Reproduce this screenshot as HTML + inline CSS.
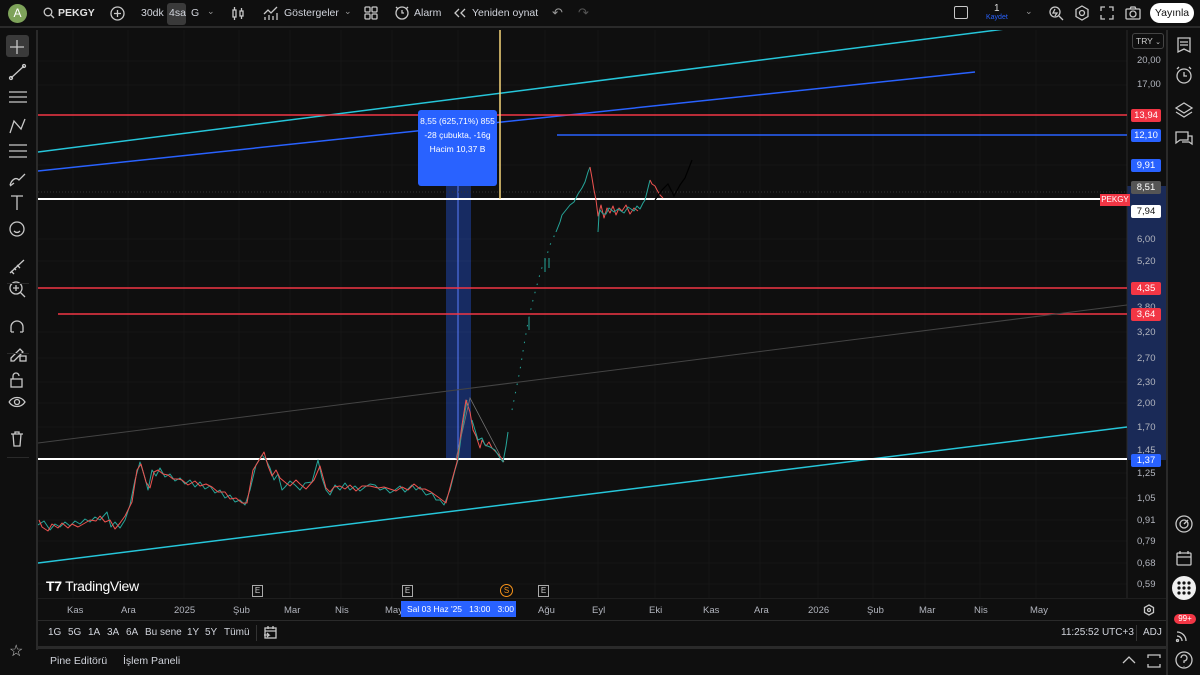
<!DOCTYPE html>
<html><head><meta charset="utf-8"><style>
*{margin:0;padding:0;box-sizing:border-box}
body{width:1200px;height:675px;background:#0f0f0f;font-family:"Liberation Sans",sans-serif;color:#d1d4dc;position:relative;overflow:hidden;font-size:12px}
.a{position:absolute;white-space:nowrap}
.pl{position:absolute;left:1131px;width:30px;height:13px;font-size:9.5px;line-height:13px;text-align:center;border-radius:2px;color:#fff}
.ax{position:absolute;left:1137px;font-size:9.5px;color:#b2b5be}
.tl{position:absolute;top:605px;font-size:9.5px;color:#b2b5be}
.rb{position:absolute;top:627px;font-size:10px;color:#d1d4dc}
.ic{position:absolute;stroke:#c8c8c8;fill:none;stroke-width:1.3}
.tb{font-size:10.5px}
</style></head><body>
<!-- top bar -->
<div class="a" style="left:0;top:0;width:1200px;height:28px;background:#0f0f0f;border-bottom:2px solid #2a2a2a"></div>
<div class="a" style="left:8px;top:4px;width:19px;height:19px;border-radius:50%;background:#7ea35a;color:#fff;font-size:12px;text-align:center;line-height:19px">A</div>
<svg class="ic" style="left:43px;top:7px" width="12" height="12"><circle cx="5" cy="5" r="3.8"/><path d="M8 8l3 3"/></svg>
<div class="a tb" style="left:58px;top:7px;font-weight:bold;color:#e0e0e0">PEKGY</div>
<svg class="ic" style="left:110px;top:6px" width="15" height="15"><circle cx="7.5" cy="7.5" r="6.5"/><path d="M7.5 4v7M4 7.5h7"/></svg>
<div class="a tb" style="left:141px;top:7px">30dk</div>
<div class="a" style="left:167px;top:3px;width:19px;height:22px;background:#3a3a3a;border-radius:3px"></div>
<div class="a tb" style="left:169px;top:7px">4sa</div>
<div class="a tb" style="left:191px;top:7px">G</div>
<div class="a" style="left:207px;top:6px;font-size:9px;color:#999">⌄</div>
<svg class="ic" style="left:231px;top:6px" width="14" height="15"><rect x="2" y="4" width="3" height="7"/><path d="M3.5 1v3M3.5 11v3"/><rect x="9" y="5" width="3" height="5"/><path d="M10.5 2v3M10.5 10v3"/></svg>
<svg class="ic" style="left:263px;top:5px" width="16" height="16"><path d="M1 9l4-4 3 3 6-6M2 15v-3M6 15v-5M10 15v-4M14 15v-7"/></svg>
<div class="a tb" style="left:284px;top:7px">Göstergeler</div>
<div class="a" style="left:344px;top:6px;font-size:9px;color:#999">⌄</div>
<svg class="ic" style="left:364px;top:6px" width="14" height="14"><rect x="1" y="1" width="5" height="5" rx="1"/><rect x="8" y="1" width="5" height="5" rx="1"/><rect x="1" y="8" width="5" height="5" rx="1"/><rect x="8" y="8" width="5" height="5" rx="1"/></svg>
<svg class="ic" style="left:394px;top:5px" width="16" height="16"><circle cx="8" cy="8" r="6"/><path d="M8 5v3h2M2 2l2 2M14 2l-2 2"/></svg>
<div class="a tb" style="left:414px;top:7px">Alarm</div>
<svg class="ic" style="left:454px;top:8px" width="12" height="10"><path d="M5 1L1 5l4 4M11 1L7 5l4 4"/></svg>
<div class="a tb" style="left:472px;top:7px">Yeniden oynat</div>
<div class="a" style="left:552px;top:5px;font-size:13px;color:#999">↶</div>
<div class="a" style="left:578px;top:5px;font-size:13px;color:#555">↷</div>
<div class="a" style="left:954px;top:6px;width:14px;height:13px;border:1.3px solid #c8c8c8;border-radius:2px"></div>
<div class="a" style="left:994px;top:3px;font-size:10px;color:#ddd">1</div>
<div class="a" style="left:986px;top:14px;font-size:7px;color:#2962ff">Kaydet</div>
<div class="a" style="left:1025px;top:6px;font-size:9px;color:#999">⌄</div>
<svg class="ic" style="left:1048px;top:5px" width="16" height="16"><circle cx="7" cy="7" r="5"/><path d="M11 11l4 4M7 4l-2 4h4l-2 3"/></svg>
<svg class="ic" style="left:1074px;top:5px" width="16" height="16"><path d="M8 1l6 3.5v7L8 15l-6-3.5v-7z"/><circle cx="8" cy="8" r="2.5"/></svg>
<svg class="ic" style="left:1100px;top:6px" width="14" height="14"><path d="M1 5V1h4M9 1h4v4M13 9v4H9M5 13H1V9"/></svg>
<svg class="ic" style="left:1125px;top:6px" width="16" height="14"><rect x="1" y="3" width="14" height="10" rx="1"/><circle cx="8" cy="8" r="3"/><path d="M5 3l1-2h4l1 2"/></svg>
<div class="a" style="left:1150px;top:3px;width:44px;height:20px;border-radius:10px;background:#fff;color:#111;font-size:10.5px;text-align:center;line-height:20px">Yayınla</div>
<!-- left toolbar -->
<div class="a" style="left:36px;top:30px;width:2px;height:620px;background:#2a2a2a"></div>
<div class="a" style="left:6px;top:35px;width:23px;height:22px;background:#3a3a3a;border-radius:3px"></div>
<svg class="ic" style="left:0;top:30px" width="36" height="420" stroke="#c8c8c8">
<path d="M17 10v14M10 17h14"/>
<path d="M11 48l13-12"/><circle cx="11" cy="48" r="1.5"/><circle cx="24" cy="36" r="1.5"/>
<path d="M9 62h18M9 67h18M9 72h18"/>
<path d="M10 103l4-12 7 8 4-10"/>
<path d="M9 115h18M9 121h18M9 127h18"/>
<path d="M10 155c2-6 6-8 9-5l6-6M14 153l-4 3"/>
<path d="M11 166h12M17 166v14"/>
<circle cx="17" cy="199" r="7"/><path d="M14 201c2 2 4 2 6 0"/>
<path d="M10 243l14-13M11 241l3 3M14 238l2 2M17 235l3 3"/>
<circle cx="16" cy="258" r="6"/><path d="M20 262l5 5M13 258h6M16 255v6"/>
<path d="M11 302v-5a6 6 0 0 1 12 0v5M11 302h3M20 302h3"/>
<path d="M11 328l9-9 3 3-9 9h-3z"/><rect x="20" y="326" width="6" height="5"/>
<rect x="11" y="349" width="11" height="8"/><path d="M13 349v-3a3 3 0 0 1 6 0"/>
<path d="M9 372c4-6 12-6 16 0c-4 6-12 6-16 0"/><circle cx="17" cy="372" r="2.5"/>
<path d="M11 404h12M13 404l1 12h6l1-12M15 404v-2h4v2"/>
</svg>
<div class="a" style="left:7px;top:283px;width:22px;height:1px;background:#2a2a2a"></div>
<div class="a" style="left:7px;top:353px;width:22px;height:1px;background:#2a2a2a"></div>
<div class="a" style="left:7px;top:457px;width:22px;height:1px;background:#2a2a2a"></div>
<div class="a" style="left:9px;top:641px;font-size:16px;color:#c8c8c8">☆</div>
<!-- right sidebar -->
<div class="a" style="left:1166px;top:30px;width:2px;height:645px;background:#2a2a2a"></div>
<svg class="ic" style="left:1168px;top:30px" width="32" height="645">
<path d="M10 8h12v14l-6-3-6 3z M12 12h8M12 15h8"/>
<circle cx="16" cy="46" r="7"/><path d="M16 42v4h3M9 39l2-2M23 39l-2-2"/>
<path d="M8 78l8-5 8 5-8 5zM8 82l8 5 8-5"/>
<path d="M8 102h12v8h-8l-4 3zM20 106h4v8l-3-2h-7"/>
<circle cx="16" cy="494" r="8"/><circle cx="16" cy="494" r="4"/><path d="M16 494l4-4"/>
<rect x="9" y="523" width="14" height="12" rx="1"/><path d="M9 527h14M12 521v3M20 521v3"/>
<path d="M9 602a9 9 0 0 1 9 9M9 606a5 5 0 0 1 5 5"/><circle cx="9.5" cy="610.5" r="1"/>
<circle cx="16" cy="630" r="8"/><path d="M13 628a3 3 0 1 1 3 3v2M16 636v.5"/>
</svg>
<div class="a" style="left:1172px;top:576px;width:24px;height:24px;border-radius:50%;background:#f0f0f0"></div>
<svg class="a" style="left:1176px;top:580px" width="16" height="16"><g fill="#111"><circle cx="3" cy="3" r="1.6"/><circle cx="8" cy="3" r="1.6"/><circle cx="13" cy="3" r="1.6"/><circle cx="3" cy="8" r="1.6"/><circle cx="8" cy="8" r="1.6"/><circle cx="13" cy="8" r="1.6"/><circle cx="3" cy="13" r="1.6"/><circle cx="8" cy="13" r="1.6"/><circle cx="13" cy="13" r="1.6"/></g></svg>
<div class="a" style="left:1174px;top:614px;width:22px;height:10px;border-radius:5px;background:#f23645;color:#fff;font-size:8px;text-align:center;line-height:10px">99+</div>
<!-- chart svg -->
<svg class="a" style="left:38px;top:30px" width="1128" height="568" viewBox="38 30 1128 568">
<g stroke="#161616" stroke-width="1">
<path d="M73 30v568M128 30v568M184 30v568M239 30v568M290 30v568M341 30v568M392 30v568M458 30v568M545 30v568M598 30v568M655 30v568M709 30v568M760 30v568M818 30v568M873 30v568M925 30v568M980 30v568M1036 30v568"/>
<path d="M38 61h1089M38 85h1089M38 165h1089M38 239h1089M38 261h1089M38 332h1089M38 358h1089M38 382h1089M38 403h1089M38 427h1089M38 473h1089M38 498h1089M38 520h1089M38 541h1089M38 563h1089M38 584h1089"/>
</g>
<rect x="1127" y="186" width="40" height="274" fill="#1a2a57"/>
<path d="M1127 30v568" stroke="#2a2a2a"/>
<rect x="446" y="165" width="25" height="294" fill="#2962ff" opacity="0.35"/>
<path d="M458 459V167M454 172l4-5 4 5" stroke="#5a7dff" fill="none" stroke-width="1"/>
<path d="M38 152L1005 29" stroke="#26c6da" stroke-width="1.5"/>
<path d="M38 171L975 72" stroke="#2962ff" stroke-width="1.5"/>
<path d="M38 115H1127" stroke="#f23645" stroke-width="1.5"/>
<path d="M557 135H1127" stroke="#2962ff" stroke-width="1.5"/>
<path d="M38 288H1127M58 314H1127" stroke="#f23645" stroke-width="1.5"/>
<path d="M38 443L1127 305" stroke="#444" stroke-width="1"/>
<path d="M38 563L1127 427" stroke="#26c6da" stroke-width="1.5"/>
<path d="M38 199H1100" stroke="#fff" stroke-width="2"/>
<path d="M38 459H1127" stroke="#fff" stroke-width="2"/>
<path d="M38 192H1127" stroke="#333" stroke-width="1" stroke-dasharray="1 2"/>
<path d="M500 30V199" stroke="#f7d57a" stroke-width="1.5"/>
<g fill="none" stroke-width="1" stroke-linejoin="round">
<polyline stroke="#26a69a" points="38,525 44,521 50,530 55,524 60,527 65,522 70,526 75,521 80,524 85,519 90,522 95,517 100,520 107,512 111,527 115,522 120,528 125,520 130,505 135,480 140,462 145,478 148,490 152,470 156,476 160,468 165,477 170,474 175,481 180,478 185,484 190,480 195,487 200,482 205,489 210,486 215,493 220,490 225,498 230,495 235,502 240,500 245,505 250,490 256,465 262,455 266,460 270,468 274,480 278,474 282,490 285,487 290,481 295,485 300,490 305,483 312,482 318,460 322,478 326,490 330,495 335,485 340,490 345,483 350,490 355,486 360,491 365,487 370,484 375,485 380,490 385,488 390,493 395,490 400,486 405,492 412,485 416,490 420,487 426,495 432,493 436,500 440,500 444,505 450,490 455,470 458,460 462,430 467,400"/>
<polyline stroke="#ef5350" points="39,520 42,527 48,531 52,524 58,528 62,523 68,528 72,524 78,527 85,523 90,520 96,521 100,516 105,522 110,520 115,529 120,523 125,516 132,502 137,470 141,464 146,482 150,488 154,472 158,470 163,474 168,475 173,479 178,479 182,480 188,485 195,481 200,486 206,484 212,487 218,492 225,492 230,499 236,498 242,503 247,503 253,470 258,462 264,452 268,466 272,476 276,470 280,478 286,483 290,486 296,480 300,484 306,489 314,480 320,466 326,488 330,492 334,487 340,486 345,489 350,485 356,491 362,486 370,486 378,488 384,487 390,489 396,491 402,487 408,490 414,484 420,489 425,489 431,492 438,497 446,503 452,480 457,462 462,425 466,400 470,412 473,430 476,436 480,448 482,440 486,446 489,442 492,448 496,452 500,456 504,462"/>
<polyline stroke="#26a69a" points="472,420 478,440 482,438 485,445 490,447 495,450 500,458 503,462 506,446 508,432"/>
<polyline stroke="#26a69a" stroke-dasharray="1.5 7" points="512,410 515,395 520,370 524,345 528,322 533,300 537,285 541,270 546,258 550,245 556,232"/>
<path d="M529 330v-12M545 272v-14M549 268v-10" stroke="#26a69a"/>
<polyline stroke="#26a69a" points="556,232 560,222 562,215 566,210 570,205 574,202 578,194 582,188 585,182 588,172 590,167"/>
<polyline stroke="#ef5350" points="590,167 592,178 594,190 596,200 598,216 601,205 604,218 607,208 610,213 613,206 616,215 619,208 622,211 626,205 630,214 634,208 638,211"/>
<polyline stroke="#26a69a" points="598,232 599,215 600,210 603,214 606,214 609,208 614,212 618,209 624,213 628,207 634,211 637,206 640,209 643,203 645,200 648,188 650,180"/>
<polyline stroke="#ef5350" points="650,180 652,184 655,186 657,190 660,195 663,198"/>
</g>
<polyline fill="none" stroke="#000" stroke-width="1.2" points="655,200 662,190 668,184 674,196 680,185 685,178 692,160"/>
<path d="M456 459L470 398L500 455" stroke="#777" stroke-width="0.8" fill="none"/>
</svg>
<!-- tooltip -->
<div class="a" style="left:418px;top:110px;width:79px;height:76px;background:#2962ff;border-radius:3px;color:#fff;font-size:8.5px;text-align:center;line-height:14px;padding-top:4px">8,55 (625,71%) 855<br>-28 çubukta, -16g<br>Hacim 10,37 B</div>
<!-- price axis -->
<div class="a" style="left:1132px;top:33px;width:32px;height:16px;border:1px solid #444;border-radius:3px;font-size:8.5px;line-height:14px;padding-left:3px;color:#ccc">TRY <span style="font-size:7px">⌄</span></div>
<div class="ax" style="top:55px">20,00</div>
<div class="ax" style="top:79px">17,00</div>
<div class="pl" style="top:109px;background:#f23645">13,94</div>
<div class="pl" style="top:129px;background:#2962ff">12,10</div>
<div class="pl" style="top:159px;background:#2962ff">9,91</div>
<div class="pl" style="top:181px;background:#555">8,51</div>
<div class="a" style="left:1100px;top:194px;width:30px;height:12px;background:#f23645;color:#fff;font-size:8px;text-align:center;line-height:12px">PEKGY</div>
<div class="pl" style="top:205px;background:#fff;color:#111">7,94</div>
<div class="ax" style="top:234px">6,00</div>
<div class="ax" style="top:256px">5,20</div>
<div class="pl" style="top:282px;background:#f23645">4,35</div>
<div class="ax" style="top:302px">3,80</div>
<div class="pl" style="top:308px;background:#f23645">3,64</div>
<div class="ax" style="top:327px">3,20</div>
<div class="ax" style="top:353px">2,70</div>
<div class="ax" style="top:377px">2,30</div>
<div class="ax" style="top:398px">2,00</div>
<div class="ax" style="top:422px">1,70</div>
<div class="ax" style="top:445px">1,45</div>
<div class="pl" style="top:454px;background:#2962ff">1,37</div>
<div class="ax" style="top:468px">1,25</div>
<div class="ax" style="top:493px">1,05</div>
<div class="ax" style="top:515px">0,91</div>
<div class="ax" style="top:536px">0,79</div>
<div class="ax" style="top:558px">0,68</div>
<div class="ax" style="top:579px">0,59</div>
<svg class="ic" style="left:1143px;top:604px" width="12" height="12"><path d="M6 1l4.5 2.5v5L6 11 1.5 8.5v-5z"/><circle cx="6" cy="6" r="1.5"/></svg>
<!-- logo & markers -->
<div class="a" style="left:46px;top:578px;font-size:14px;color:#fff;letter-spacing:-0.3px"><span style="font-weight:900">T7</span> TradingView</div>
<div class="a" style="left:252px;top:585px;width:11px;height:12px;border:1px solid #aaa;font-size:8px;text-align:center;line-height:10px;color:#ccc">E</div>
<div class="a" style="left:402px;top:585px;width:11px;height:12px;border:1px solid #aaa;font-size:8px;text-align:center;line-height:10px;color:#ccc">E</div>
<div class="a" style="left:538px;top:585px;width:11px;height:12px;border:1px solid #aaa;font-size:8px;text-align:center;line-height:10px;color:#ccc">E</div>
<div class="a" style="left:500px;top:584px;width:13px;height:13px;border:1.3px solid #f7931a;border-radius:50%;font-size:8px;text-align:center;line-height:11px;color:#f7931a">S</div>
<!-- time axis -->
<div class="a" style="left:38px;top:598px;width:1128px;height:1px;background:#1e1e1e"></div>
<div class="tl" style="left:67px">Kas</div><div class="tl" style="left:121px">Ara</div><div class="tl" style="left:174px">2025</div><div class="tl" style="left:233px">Şub</div><div class="tl" style="left:284px">Mar</div><div class="tl" style="left:335px">Nis</div><div class="tl" style="left:385px">May</div>
<div class="a" style="left:401px;top:601px;width:115px;height:16px;background:#2962ff;color:#fff;font-size:8.5px;line-height:16px;padding-left:6px">Sal 03 Haz '25 &nbsp; 13:00 &nbsp; 3:00</div>
<div class="tl" style="left:538px">Ağu</div><div class="tl" style="left:592px">Eyl</div><div class="tl" style="left:649px">Eki</div><div class="tl" style="left:703px">Kas</div><div class="tl" style="left:754px">Ara</div><div class="tl" style="left:808px">2026</div><div class="tl" style="left:867px">Şub</div><div class="tl" style="left:919px">Mar</div><div class="tl" style="left:974px">Nis</div><div class="tl" style="left:1030px">May</div>
<!-- range bar -->
<div class="a" style="left:38px;top:620px;width:1128px;height:1px;background:#2a2a2a"></div>
<div class="rb" style="left:48px">1G</div><div class="rb" style="left:68px">5G</div><div class="rb" style="left:88px">1A</div><div class="rb" style="left:107px">3A</div><div class="rb" style="left:126px">6A</div><div class="rb" style="left:145px">Bu sene</div><div class="rb" style="left:187px">1Y</div><div class="rb" style="left:205px">5Y</div><div class="rb" style="left:224px">Tümü</div>
<div class="a" style="left:256px;top:625px;width:1px;height:16px;background:#333"></div>
<svg class="ic" style="left:263px;top:625px" width="14" height="15"><rect x="2" y="3" width="11" height="10"/><path d="M2 6h11M5 1v3M10 1v3M1 10h5l-2-2M6 10l-2 2"/></svg>
<div class="rb" style="left:1061px">11:25:52 UTC+3</div>
<div class="a" style="left:1136px;top:625px;width:1px;height:16px;background:#333"></div>
<div class="rb" style="left:1143px">ADJ</div>
<!-- bottom panel -->
<div class="a" style="left:38px;top:646px;width:1128px;height:3px;background:#2a2a2a"></div>
<div class="a" style="left:50px;top:655px;font-size:10.5px">Pine Editörü</div>
<div class="a" style="left:123px;top:655px;font-size:10.5px">İşlem Paneli</div>
<svg class="ic" style="left:1122px;top:655px" width="14" height="10"><path d="M1 8l6-6 6 6"/></svg>
<svg class="ic" style="left:1147px;top:654px" width="14" height="14"><path d="M1 4V1h12v3M1 10v3h12v-3"/></svg>
</body></html>
